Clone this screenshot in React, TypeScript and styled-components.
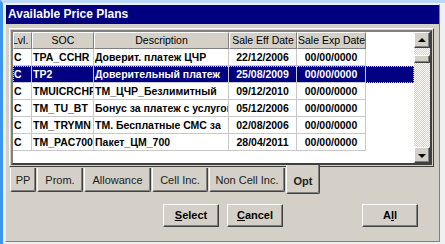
import styled, { createGlobalStyle } from 'styled-components';

const GlobalStyle = createGlobalStyle`
  html, body {
    margin: 0;
    padding: 0;
  }
  body {
    background: #eef0f2;
    font-family: "Liberation Sans", Arial, sans-serif;
  }
`;

const Screen = styled.div`
  width: 445px;
  height: 244px;
  box-sizing: border-box;
  border-left: 3px solid #3d95ee;
  border-top: 3px solid #b9d9fb;
  padding: 1px 5px 2px 2px;
  background: #eef0f2;
`;

const Dialog = styled.div`
  height: 100%;
  box-sizing: border-box;
  background: #d4d0c8;
  border: 1px solid;
  border-color: #f0f0f0 #808080 #808080 #f0f0f0;
  display: flex;
  flex-direction: column;
`;

const TitleBar = styled.div`
  height: 19px;
  background: #000080;
  color: #fff;
  font-weight: bold;
  font-size: 12px;
  line-height: 19px;
  padding-left: 2px;
`;

const TabPage = styled.div`
  margin: 4px 5px 0 3px;
  padding: 1px;
  border: 1px solid;
  border-color: #ffffff #404040 #404040 #ffffff;
`;

const GridBox = styled.div`
  display: flex;
  height: 131px;
  background: #fff;
  border: 2px solid;
  border-color: #808080 #404040 #404040 #808080;
`;

const Rows = styled.div`
  flex: 1;
  display: flex;
  flex-direction: column;
  min-width: 0;
`;

const Row = styled.div<{ $selected?: boolean }>`
  display: flex;
  height: 17px;
  background: ${p => (p.$selected ? '#000080' : 'transparent')};
  color: ${p => (p.$selected ? '#fff' : '#000')};
  outline: ${p => (p.$selected ? '1px dotted #d8d890' : 'none')};
  outline-offset: -1px;
`;

const HeadCell = styled.div<{ $w: number }>`
  width: ${p => p.$w}px;
  box-sizing: border-box;
  flex: none;
  height: 17px;
  background: #d4d0c8;
  border: 1px solid;
  border-color: #ffffff #808080 #808080 #ffffff;
  font-size: 10.5px;
  line-height: 15px;
  text-align: center;
  white-space: nowrap;
  overflow: hidden;
  color: #000;
`;

const ClippedHead = styled.span`
  display: block;
  text-align: left;
  margin-left: -2px;
`;

const Cell = styled.div<{ $w: number; $center?: boolean }>`
  width: ${p => p.$w}px;
  box-sizing: border-box;
  flex: none;
  border-right: 1px solid #c8c8c8;
  border-bottom: 1px solid #c8c8c8;
  font-size: 10.5px;
  font-weight: bold;
  line-height: 16px;
  padding-left: ${p => (p.$center ? 0 : 1)}px;
  text-align: ${p => (p.$center ? 'center' : 'left')};
  white-space: nowrap;
  overflow: hidden;
`;

const ScrollBar = styled.div`
  width: 16px;
  flex: none;
  display: flex;
  flex-direction: column;
  background: repeating-conic-gradient(#d4d0c8 0 25%, #ffffff 0 50%) 0 0 / 2px 2px;
`;

const ScrollButton = styled.div`
  width: 16px;
  height: 16px;
  box-sizing: border-box;
  background: #d4d0c8;
  border: 1px solid;
  border-color: #ffffff #404040 #404040 #ffffff;
  box-shadow: inset -1px -1px 0 #808080;
  display: flex;
  align-items: center;
  justify-content: center;
`;

const Thumb = styled(ScrollButton)`
  height: 8px;
  margin-top: 7px;
`;

const Track = styled.div`
  flex: 1;
`;

const Arrow = styled.div<{ $down?: boolean }>`
  width: 0;
  height: 0;
  border-left: 4px solid transparent;
  border-right: 4px solid transparent;
  ${p => (p.$down ? 'border-top: 4px solid #000;' : 'border-bottom: 4px solid #000;')}
  margin-top: ${p => (p.$down ? 1 : -1)}px;
`;

const TabStrip = styled.div`
  display: flex;
  gap: 1px;
  padding-left: 4px;
  height: 28px;
  align-items: flex-start;
`;

const Tab = styled.div<{ $w: number; $active?: boolean }>`
  width: ${p => p.$w}px;
  box-sizing: border-box;
  height: ${p => (p.$active ? 29 : 24)}px;
  margin-top: ${p => (p.$active ? -2 : 1)}px;
  background: #d4d0c8;
  border: 1px solid;
  border-top: none;
  border-color: #ffffff #404040 #404040 #ffffff;
  border-radius: 0 0 2px 2px;
  box-shadow: inset -1px -1px 0 #808080;
  font-size: 11px;
  font-weight: ${p => (p.$active ? 'bold' : 'normal')};
  color: #202020;
  text-align: center;
  line-height: ${p => (p.$active ? 32 : 24)}px;
  white-space: nowrap;
  position: relative;
`;

const ButtonRow = styled.div`
  display: flex;
  padding-top: 9px;
`;

const Button = styled.div<{ $gap: number }>`
  margin-left: ${p => p.$gap}px;
  width: 56px;
  height: 23px;
  box-sizing: border-box;
  background: #d4d0c8;
  border: 1px solid;
  border-color: #ffffff #404040 #404040 #ffffff;
  box-shadow: inset -1px -1px 0 #808080;
  font-size: 11px;
  font-weight: bold;
  color: #000;
  text-align: center;
  line-height: 21px;
`;

const Key = styled.span`
  text-decoration: underline;
`;

const columns = [19, 62, 135, 68, 69];
const headers = ['Lvl.', 'SOC', 'Description', 'Sale Eff Date', 'Sale Exp Date'];

const plans = [
  ['C', 'TPA_CCHR', 'Доверит. платеж ЦЧР', '22/12/2006', '00/00/0000'],
  ['C', 'TP2', 'Доверительный платеж', '25/08/2009', '00/00/0000'],
  ['C', 'TMUICRCHR', 'TM_ЦЧР_Безлимитный', '09/12/2010', '00/00/0000'],
  ['C', 'TM_TU_BT', 'Бонус за платеж с услугой', '05/12/2006', '00/00/0000'],
  ['C', 'TM_TRYMN', 'TM. Бесплатные СМС за', '02/08/2006', '00/00/0000'],
  ['C', 'TM_PAC700', 'Пакет_ЦМ_700', '28/04/2011', '00/00/0000'],
];

const tabs = [
  { label: 'PP', w: 26 },
  { label: 'Prom.', w: 46 },
  { label: 'Allowance', w: 67 },
  { label: 'Cell Inc.', w: 56 },
  { label: 'Non Cell Inc.', w: 76 },
  { label: 'Opt', w: 34, active: true },
];

export default function App() {
  return (
    <Screen>
      <GlobalStyle />
      <Dialog>
        <TitleBar>Available Price Plans</TitleBar>
        <TabPage>
          <GridBox>
            <Rows>
              <Row>
                {headers.map((h, i) => (
                  <HeadCell key={h} $w={columns[i]}>
                    {i === 0 ? <ClippedHead>{h}</ClippedHead> : h}
                  </HeadCell>
                ))}
              </Row>
              {plans.map((p, r) => (
                <Row key={p[1]} $selected={r === 1}>
                  {p.map((v, i) => (
                    <Cell key={i} $w={columns[i]} $center={i >= 3}>
                      {v}
                    </Cell>
                  ))}
                </Row>
              ))}
            </Rows>
            <ScrollBar>
              <ScrollButton>
                <Arrow />
              </ScrollButton>
              <Thumb />
              <Track />
              <ScrollButton>
                <Arrow $down />
              </ScrollButton>
            </ScrollBar>
          </GridBox>
        </TabPage>
        <TabStrip>
          {tabs.map(t => (
            <Tab key={t.label} $w={t.w} $active={t.active}>
              {t.label}
            </Tab>
          ))}
        </TabStrip>
        <ButtonRow>
          <Button $gap={157}>
            <Key>S</Key>elect
          </Button>
          <Button $gap={8}>
            <Key>C</Key>ancel
          </Button>
          <Button $gap={79}>
            A<Key>l</Key>l
          </Button>
        </ButtonRow>
      </Dialog>
    </Screen>
  );
}
